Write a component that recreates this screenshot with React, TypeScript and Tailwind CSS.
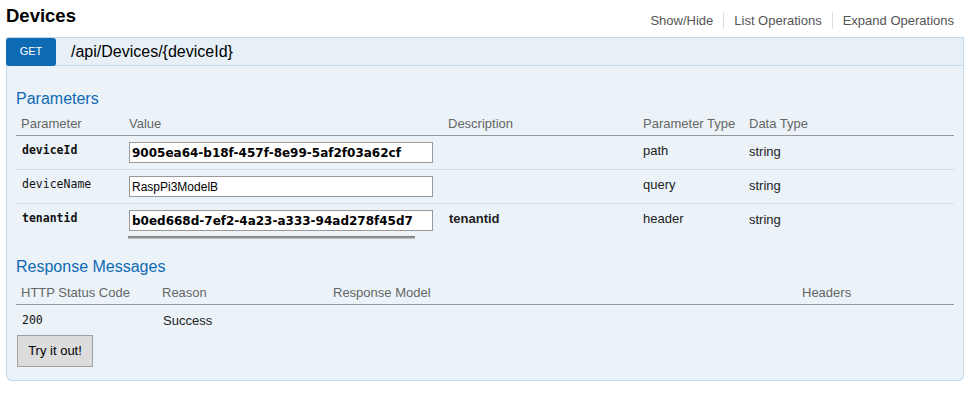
const sans = { fontFamily: '"Liberation Sans", Arial, sans-serif' }

interface Param {
  name: string
  value: string
  required: boolean
  description: string
  paramType: string
  dataType: string
}

const params: Param[] = [
  { name: "deviceId", value: "9005ea64-b18f-457f-8e99-5af2f03a62cf", required: true, description: "", paramType: "path", dataType: "string" },
  { name: "deviceName", value: "RaspPi3ModelB", required: false, description: "", paramType: "query", dataType: "string" },
  { name: "tenantid", value: "b0ed668d-7ef2-4a23-a333-94ad278f45d7", required: true, description: "tenantid", paramType: "header", dataType: "string" },
]

const paramCols = "grid grid-cols-[108px_319px_195px_106px_1fr]"
const respCols = "grid grid-cols-[141px_171px_469px_1fr]"

export default function App() {
  return (
    <div className="w-[972px] h-[401px] bg-white text-[13px] text-[#222]" style={sans}>
      {/* resource heading */}
      <div className="ml-[6px] w-[958px] h-[37px] flex items-start justify-between">
        <h2 className="pt-[5px] text-[18.5px] leading-[22px] font-bold text-black">Devices</h2>
        <div className="pt-[12px] pr-[10px] flex items-center text-[13px] leading-[15px] text-[#555]">
          <span>Show/Hide</span>
          <span className="mx-[10px] w-px h-[17px] bg-[#dddddd]" />
          <span>List Operations</span>
          <span className="mx-[10px] w-px h-[17px] bg-[#dddddd]" />
          <span>Expand Operations</span>
        </div>
      </div>

      {/* operation */}
      <div className="ml-[6px] w-[958px] border border-t-0 border-[#c3d9ec] rounded-b-[6px] bg-[#ebf3f9]">
        <div className="flex items-center h-[29px] bg-[#e7f0f7] border-t border-b border-[#c3d9ec]">
          <span className="-ml-px w-[50px] h-[28px] flex items-center justify-center bg-[#0f6ab4] rounded-[3px] text-white text-[11px]">
            GET
          </span>
          <span className="ml-[15px] text-[16px] text-black">/api/Devices/{"{deviceId}"}</span>
        </div>

        <div className="px-[9px] pt-[24px] pb-[13px]">
          <h4 className="text-[16px] leading-[18px] text-[#0f6ab4]">Parameters</h4>
          <div className={`${paramCols} pt-[8px] pb-[4px] leading-[15px] text-[#666] border-b border-[#999]`}>
            <div className="pl-[5px]">Parameter</div>
            <div className="pl-[5px]">Value</div>
            <div className="pl-[5px]">Description</div>
            <div className="pl-[5px]">Parameter Type</div>
            <div className="pl-[5px]">Data Type</div>
          </div>
          {params.map((p, i) => (
            <div
              key={p.name}
              className={`${paramCols} py-[6px] ${i < params.length - 1 ? "border-b border-[#d4dde5]" : ""}`}
            >
              <div
                className={`pl-[6px] pt-[1px] leading-[15px] text-[11.5px] text-[#111] ${p.required ? "font-bold" : ""}`}
                style={{ fontFamily: '"DejaVu Sans Mono", monospace' }}
              >
                {p.name}
              </div>
              <div className="pl-[5px]">
                <div
                  className={`w-[304px] h-[21px] border border-[#999] bg-white pl-[2px] flex items-center text-black ${
                    p.required ? "font-bold text-[12px]" : "text-[12px]"
                  }`}
                  style={p.required ? { fontFamily: '"DejaVu Sans", Verdana, sans-serif' } : sans}
                >
                  {p.value}
                </div>
                {p.name === "tenantid" && (
                  <div className="mt-[5px] -ml-px w-[287px] h-[3px] bg-gradient-to-b from-[#6f6f6f] to-[#c4c4c4]" />
                )}
              </div>
              <div className="pl-[6px] pt-[1px] leading-[15px] font-bold">{p.description}</div>
              <div className="pl-[5px] pt-[1px] leading-[15px]">{p.paramType}</div>
              <div className="pl-[5px] pt-[2px] leading-[15px]">{p.dataType}</div>
            </div>
          ))}

          <h4 className="mt-[13px] text-[16px] leading-[18px] text-[#0f6ab4]">Response Messages</h4>
          <div className={`${respCols} pt-[9px] pb-[4px] leading-[15px] text-[#666] border-b border-[#999]`}>
            <div className="pl-[5px]">HTTP Status Code</div>
            <div className="pl-[5px]">Reason</div>
            <div className="pl-[5px]">Response Model</div>
            <div className="pl-[5px]">Headers</div>
          </div>
          <div className={`${respCols} pt-[8px] leading-[15px]`}>
            <div className="pl-[6px] text-[11.5px] text-[#111]" style={{ fontFamily: '"DejaVu Sans Mono", monospace' }}>
              200
            </div>
            <div className="pl-[6px]">Success</div>
            <div />
            <div />
          </div>
          <button className="mt-[7px] ml-[1px] w-[76px] h-[32px] bg-[#dcdcdc] border border-[#a0a0a0] text-[13px] text-black">
            Try it out!
          </button>
        </div>
      </div>
    </div>
  )
}
